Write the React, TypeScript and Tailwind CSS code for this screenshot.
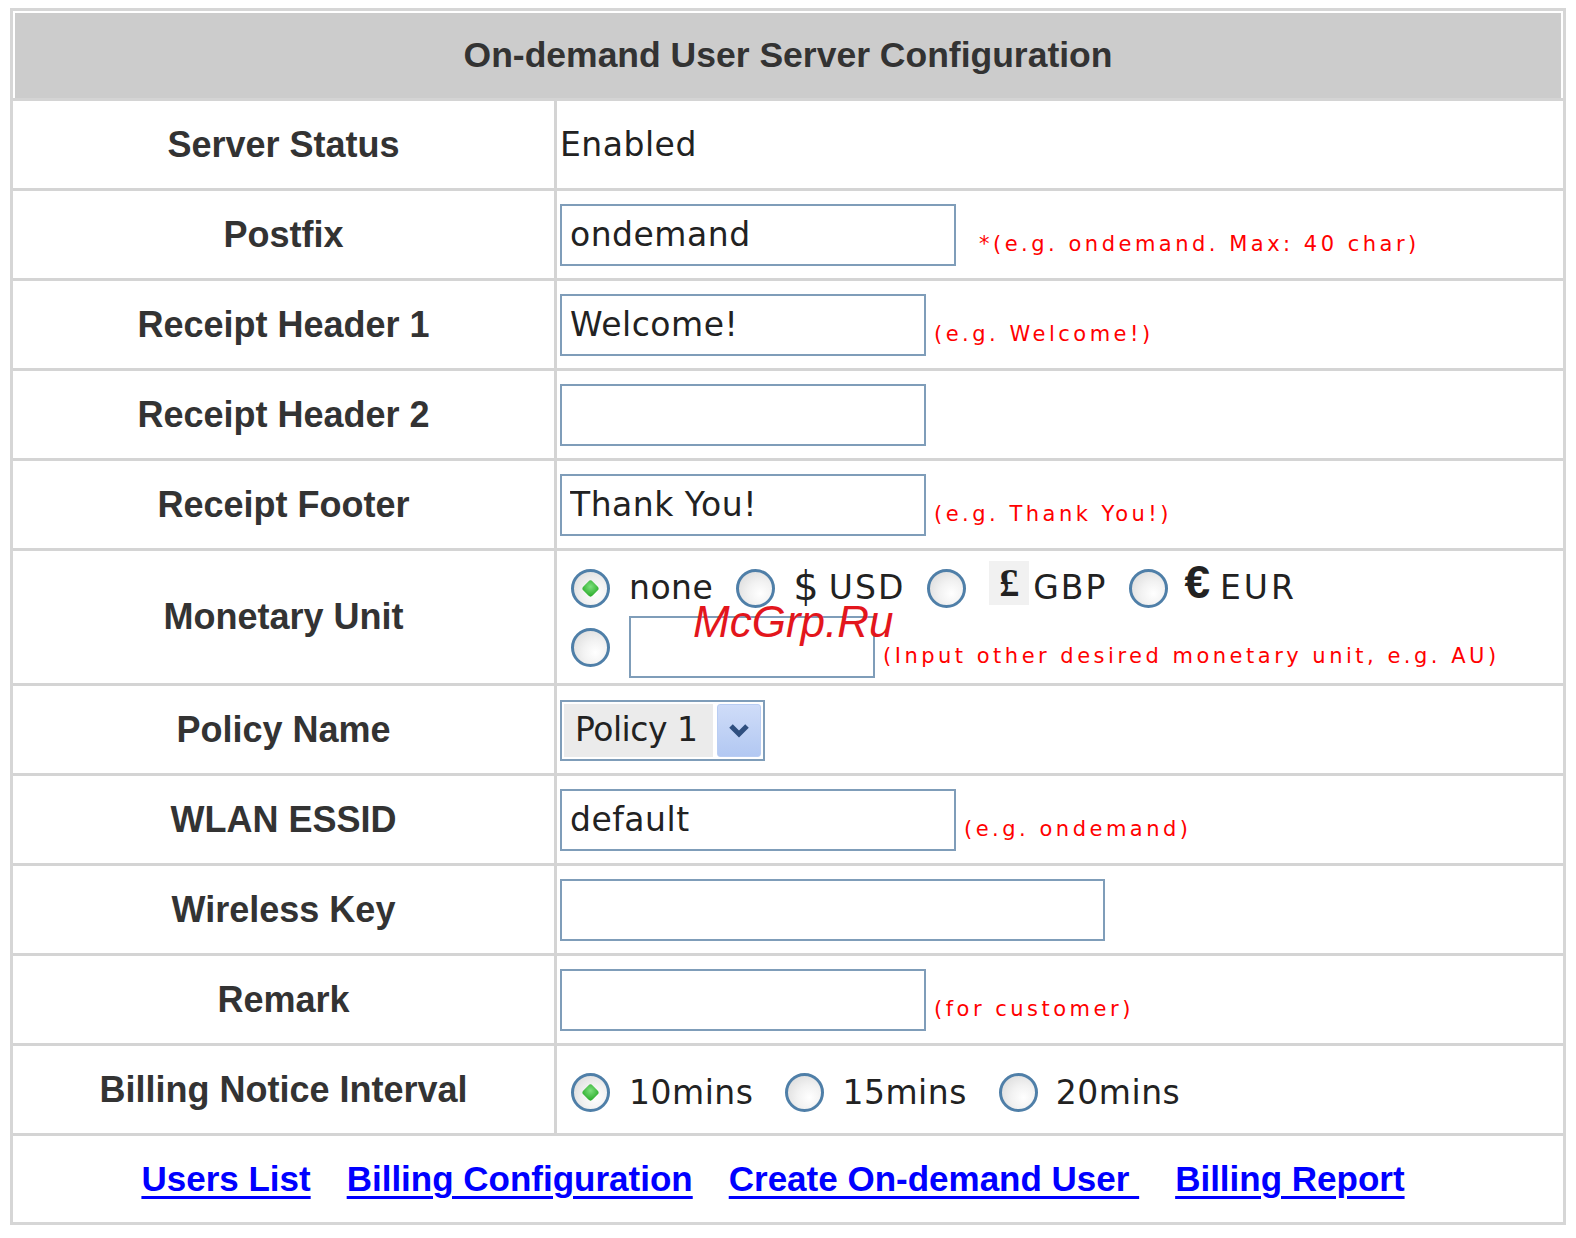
import React from "react";

const LABEL =
  "w-[544px] shrink-0 flex items-center justify-center border-r-[3px] border-[#d4d4d4] text-[36px] font-bold text-[#333333] font-['Liberation_Sans',Arial,sans-serif]";

function Row({
  label,
  tall,
  children,
}: {
  label: string;
  tall?: boolean;
  children?: React.ReactNode;
}) {
  return (
    <div
      className={
        tall
          ? "flex border-t-[3px] border-[#d4d4d4] h-[135px]"
          : "flex border-t-[3px] border-[#d4d4d4] h-[90px]"
      }
    >
      <div className={LABEL}>{label}</div>
      <div className="flex-1 flex items-center pl-[3px]">{children}</div>
    </div>
  );
}

function TextBox({ w, value }: { w: string; value?: string }) {
  return (
    <input
      readOnly
      value={value ?? ""}
      className={`${w} h-[62px] shrink-0 border-2 border-[#7f9db9] bg-white pl-[8px] text-[33px] tracking-[0.5px] text-[#222222] outline-none font-['DejaVu_Sans',sans-serif]`}
    />
  );
}

function Hint({ children, ml }: { children: React.ReactNode; ml: string }) {
  return (
    <span
      className={`${ml} mt-[20px] text-[21px] tracking-[3.5px] text-[#ff0000] whitespace-nowrap font-['DejaVu_Sans',sans-serif]`}
    >
      {children}
    </span>
  );
}

function Radio({ checked, className }: { checked?: boolean; className?: string }) {
  return (
    <span
      className={`${className ?? ""} w-[39px] h-[39px] shrink-0 rounded-full border-[3px] border-[#4f7fa8] bg-[radial-gradient(circle_at_65%_65%,#ffffff_0%,#f2f2f2_40%,#d6d6d6_100%)] flex items-center justify-center`}
    >
      {checked && (
        <span className="w-[13px] h-[13px] rotate-45 rounded-[3px] bg-[radial-gradient(circle_at_40%_40%,#7ee07e,#1fa51f)]" />
      )}
    </span>
  );
}

const VAL =
  "text-[33px] tracking-[0.5px] text-[#222222] font-['DejaVu_Sans',sans-serif] whitespace-nowrap";

const LINK = "underline decoration-[3px] underline-offset-[5px]";

export default function App() {
  return (
    <div className="relative w-[1576px] h-[1238px] bg-white pt-[8px] pl-[10px]">
      <div className="w-[1556px] border-[3px] border-[#d6d6d6] bg-white">
        {/* header */}
        <div className="mx-[2px] mt-[2px] h-[85px] bg-[#cccccc] flex items-center justify-center text-[35.5px] font-bold text-[#333333] font-['Liberation_Sans',Arial,sans-serif]">
          On-demand User Server Configuration
        </div>

        <Row label="Server Status">
          <span className={VAL}>Enabled</span>
        </Row>

        <Row label="Postfix">
          <TextBox w="w-[396px]" value="ondemand" />
          <Hint ml="ml-[23px]">*(e.g. ondemand. Max: 40 char)</Hint>
        </Row>

        <Row label="Receipt Header 1">
          <TextBox w="w-[366px]" value="Welcome!" />
          <Hint ml="ml-[8px]">(e.g. Welcome!)</Hint>
        </Row>

        <Row label="Receipt Header 2">
          <TextBox w="w-[366px]" />
        </Row>

        <Row label="Receipt Footer">
          <TextBox w="w-[366px]" value="Thank You!" />
          <Hint ml="ml-[8px]">(e.g. Thank You!)</Hint>
        </Row>

        <Row label="Monetary Unit" tall>
          <div className="flex flex-col self-stretch pt-[17px]">
            <div className="flex items-center h-[40px]">
              <Radio checked className="ml-[11px]" />
              <span className={`ml-[19px] ${VAL}`}>none</span>
              <Radio className="ml-[23px]" />
              <span className="ml-[18px] text-[40px] leading-none text-[#222222] font-['DejaVu_Sans',sans-serif] mb-[4px]">
                $
              </span>
              <span className={`ml-[10px] tracking-[2px] ${VAL}`}>USD</span>
              <Radio className="ml-[22px]" />
              <span className="ml-[23px] w-[40px] h-[44px] mb-[10px] bg-[#f1f1f1] flex items-center justify-center text-[40px] font-bold leading-none text-[#222222] font-['Liberation_Serif',serif]">
                £
              </span>
              <span className={`ml-[4px] tracking-[2px] ${VAL}`}>GBP</span>
              <Radio className="ml-[22px]" />
              <span className="ml-[16px] mb-[12px] text-[46px] font-bold leading-none text-[#222222] font-['Liberation_Sans',sans-serif]">
                €
              </span>
              <span className={`ml-[10px] tracking-[3px] ${VAL}`}>EUR</span>
            </div>
            <div className="flex items-center h-[62px] mt-[8px]">
              <Radio className="ml-[11px]" />
              <span className="ml-[19px] flex">
                <TextBox w="w-[246px]" />
              </span>
              <Hint ml="ml-[8px]">(Input other desired monetary unit, e.g. AU)</Hint>
            </div>
          </div>
        </Row>

        <Row label="Policy Name">
          <div className="w-[205px] h-[61px] border-2 border-[#7f9db9] bg-white flex items-stretch p-[2px] mt-[1px]">
            <div className="flex-1 bg-[#ebebeb] flex items-center pl-[11px] text-[33px] text-[#222222] font-['DejaVu_Sans',sans-serif] tracking-[-0.5px]">
              Policy 1
            </div>
            <div className="w-[44px] ml-[4px] rounded-[3px] border border-[#b9cdf3] bg-[linear-gradient(180deg,#cfdcf8,#b2c8f2)] flex items-center justify-center">
              <svg width="22" height="16" viewBox="0 0 22 16">
                <path d="M3 4 L11 12 L19 4" fill="none" stroke="#2f4f7f" strokeWidth="5" strokeLinejoin="miter" />
              </svg>
            </div>
          </div>
        </Row>

        <Row label="WLAN ESSID">
          <TextBox w="w-[396px]" value="default" />
          <Hint ml="ml-[8px]">(e.g. ondemand)</Hint>
        </Row>

        <Row label="Wireless Key">
          <TextBox w="w-[545px]" />
        </Row>

        <Row label="Remark">
          <TextBox w="w-[366px]" />
          <Hint ml="ml-[8px]">(for customer)</Hint>
        </Row>

        <Row label="Billing Notice Interval">
          <div className="flex items-center mt-[6px]">
            <Radio checked className="ml-[11px]" />
            <span className={`ml-[19px] ${VAL}`}>10mins</span>
            <Radio className="ml-[32px]" />
            <span className={`ml-[18px] ${VAL}`}>15mins</span>
            <Radio className="ml-[32px]" />
            <span className={`ml-[18px] ${VAL}`}>20mins</span>
          </div>
        </Row>

        <div className="h-[89px] border-t-[3px] border-[#d4d4d4] flex items-center justify-center gap-[36px] pr-[30px] text-[35px] font-bold text-[#0000ff] font-['Liberation_Sans',Arial,sans-serif]">
          <a href="#" className={LINK}>
            Users List
          </a>
          <a href="#" className={LINK}>
            Billing Configuration
          </a>
          <a href="#" className={`${LINK} whitespace-pre`}>
            {"Create On-demand User\u00a0"}
          </a>
          <a href="#" className={LINK}>
            Billing Report
          </a>
        </div>
      </div>

      {/* watermark */}
      <div className="absolute left-[693px] top-[600px] text-[44px] italic leading-none text-[#e3161c] font-['Liberation_Sans',Arial,sans-serif] pointer-events-none">
        McGrp.Ru
      </div>
    </div>
  );
}
